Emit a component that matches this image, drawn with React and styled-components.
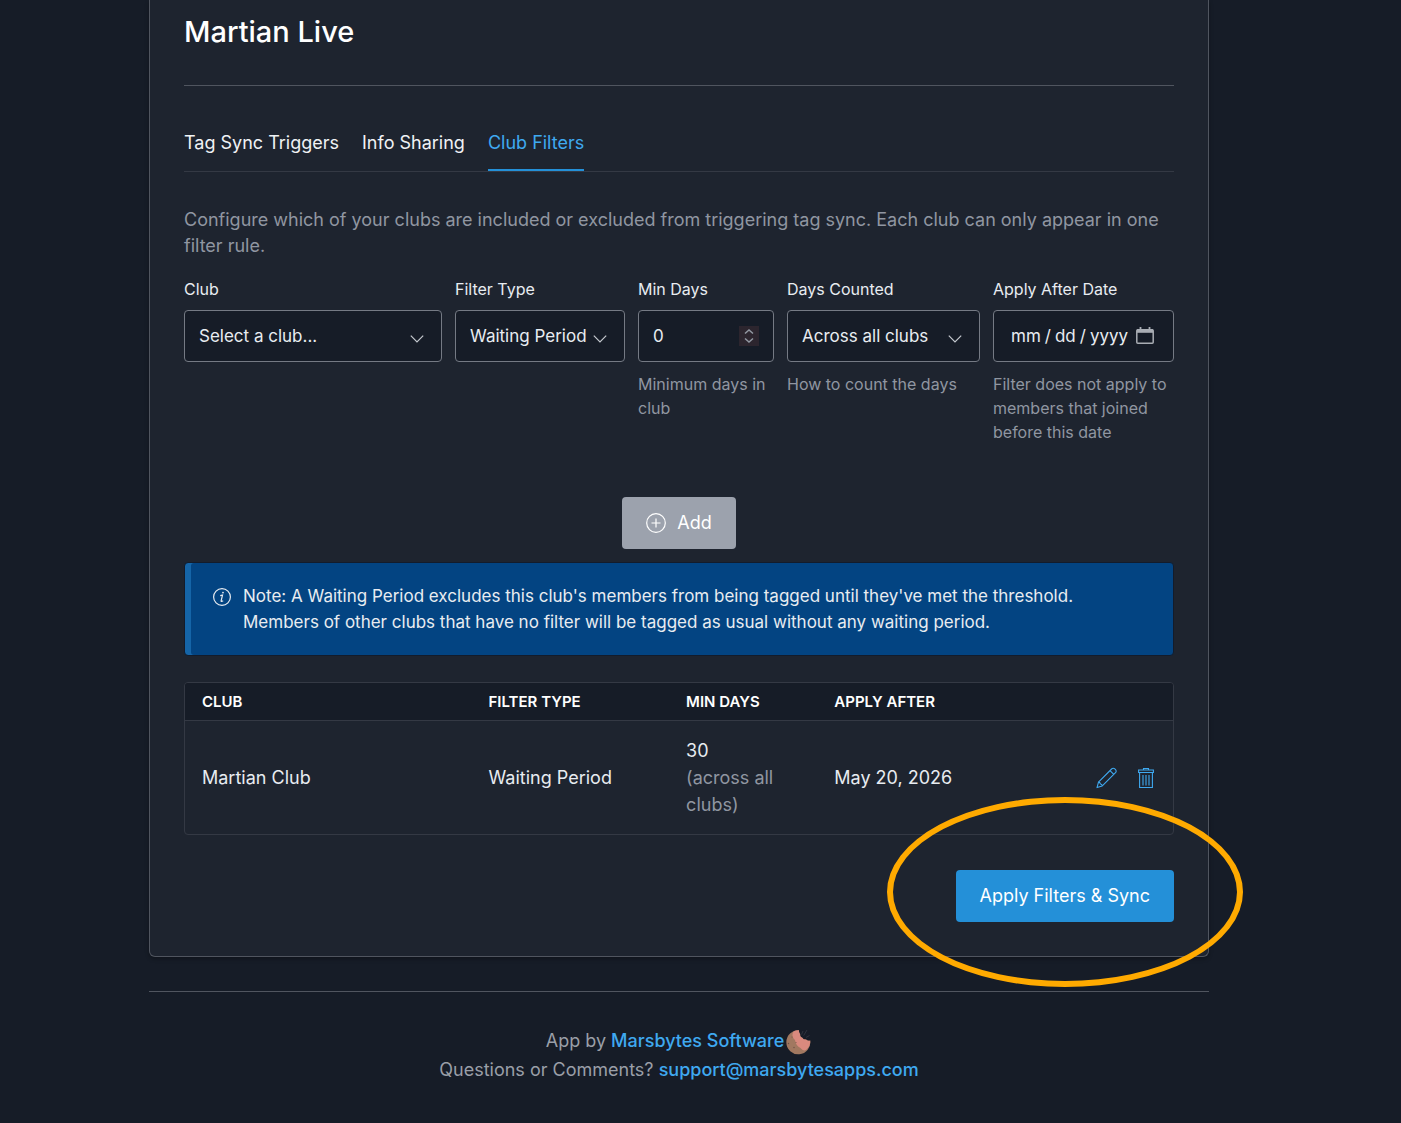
import React from 'react';
import styled, { createGlobalStyle, css } from 'styled-components';


const GlobalStyle = createGlobalStyle`
  *, *::before, *::after {
    box-sizing: border-box;
  }
  body {
    margin: 0;
    background: #161c27;
    color: #e8ecf1;
    font-family: 'Inter', 'Liberation Sans', sans-serif;
    font-size: 18px;
    line-height: 26px;
  }
`

const Page = styled.div`
  padding: 0 43px 40px 0;
  @media (max-width: 991.98px){
    padding: 0 16px 40px;
  }
`

const Container = styled.div`
  max-width: 1060px;
  margin: 0 auto;
`

const Card = styled.main`
  padding: 13px 34px 34px;
  background: #1e242f;
  border: 1px solid #50555f;
  border-top: 0;
  border-radius: 0 0 6px 6px;
  box-shadow: 0 2px 4px rgba(0, 0, 0, 0.3);
`

const Title = styled.h1`
  margin: 0;
  padding-bottom: 34px;
  border-bottom: 1px solid #50555f;
  color: #ffffff;
  font-size: 29px;
  font-weight: 500;
  line-height: 38px;
`

const Tabs = styled.nav`
  display: flex;
  gap: 23px;
  margin-top: 28px;
  border-bottom: 1px solid #343944;
`

const Tab = styled.a`
  padding: 16px 0 13px;
  border-bottom: 2px solid ${props => props.$active ? '#2490d8' : 'transparent'};
  color: ${props => props.$active ? '#3fa9f0' : '#f0f2f5'};
  text-decoration: none;
`

const Description = styled.p`
  margin: 35px 0 0;
  color: #9096a1;
`

const Fields = styled.form`
  display: grid;
  grid-template-columns: 258fr 170fr 136fr 193fr 181fr;
  gap: 13px;
  margin-top: 17px;
  @media (max-width: 991.98px){
    grid-template-columns: 1fr;
  }
`

const Field = styled.div`
  min-width: 0;
`

const Label = styled.label`
  display: block;
  margin-bottom: 8px;
  font-size: 16px;
`

const ControlBox = styled.div`
  display: grid;
  grid-template-columns: minmax(0, 1fr);
  align-items: center;
  height: 52px;
  background: #161c27;
  border: 1px solid #757a84;
  border-radius: 4px;
  font-size: 17px;
`

const controlStyle = css`
  grid-area: 1 / 1;
  width: 100%;
  height: 50px;
  margin: 0;
  padding: 0 14px;
  background: transparent;
  border: 0;
  color: inherit;
  font: inherit;
  appearance: none;
`

const Select = styled.select`
  ${controlStyle}
`

const NumberInput = styled.input`
  ${controlStyle}
  appearance: textfield;
  &::-webkit-inner-spin-button {
    display: none;
  }
`

const DateInput = styled.input`
  ${controlStyle}
  padding: 0 16px;
  &::-webkit-calendar-picker-indicator {
    opacity: 0;
  }
  &::-webkit-datetime-edit-text {
    padding: 0 3px;
  }
`

const ControlIcon = styled.svg`
  grid-area: 1 / 1;
  justify-self: end;
  margin-right: ${props => props.$inset};
  pointer-events: none;
`

const Help = styled.p`
  margin: 10px 0 0;
  color: #9096a1;
  font-size: 16px;
  line-height: 24px;
`

const ButtonRow = styled.div`
  display: flex;
  justify-content: ${props => props.$align};
  margin-top: ${props => props.$top};
`

const Button = styled.button`
  display: flex;
  align-items: center;
  gap: 11px;
  height: 52px;
  padding: 0 24px;
  background: ${props => props.disabled ? '#9ca2ad' : '#2490d8'};
  border: 0;
  border-radius: 4px;
  color: #ffffff;
  font: inherit;
`

const Note = styled.div`
  display: flex;
  gap: 12px;
  margin-top: 13px;
  padding: 20px 24px 20px 28px;
  background: #034482;
  border: 1px solid #131c2c;
  border-radius: 4px;
  box-shadow: inset 6px 0 #1565a8;
  font-size: 17px;
  svg {
    flex: none;
    margin-top: 5px;
  }
`

const TableFrame = styled.div`
  margin-top: 26px;
  overflow: hidden;
  border: 1px solid #343944;
  border-radius: 4px;
`

const Table = styled.table`
  width: 100%;
  border-collapse: collapse;
  table-layout: fixed;
`

const HeadCell = styled.th`
  width: ${props => props.$width};
  padding: 6px 17px 5px;
  background: #161c27;
  border-bottom: 1px solid #343944;
  color: #ffffff;
  font-size: 15px;
  font-weight: 600;
  text-align: left;
  text-transform: uppercase;
`

const Cell = styled.td`
  padding: 16px 17px;
  line-height: 27px;
`

const Muted = styled.span`
  display: block;
  color: #9096a1;
`

const RowActions = styled.div`
  display: flex;
  justify-content: flex-end;
  gap: 20px;
  padding-right: 2px;
`

const IconButton = styled.button`
  display: flex;
  padding: 0;
  background: none;
  border: 0;
  color: #3fa9f0;
`

const Highlighted = styled.div`
  position: relative;
`

const Ring = styled.div`
  position: absolute;
  top: -73px;
  right: -69px;
  width: 356px;
  height: 190px;
  border: 6px solid #ffaa00;
  border-radius: 50%;
  pointer-events: none;
`

const Footer = styled.footer`
  margin-top: 34px;
  padding-top: 34px;
  border-top: 1px solid #50555f;
  color: #9a9fa8;
  text-align: center;
`

const FooterLine = styled.div`
  display: flex;
  justify-content: center;
  align-items: center;
  line-height: 29px;
  white-space: pre-wrap;
`

const FooterLink = styled.a`
  color: #3fa9f0;
  font-weight: 500;
  text-decoration: none;
`


const Chevron = () => (
  <ControlIcon $inset="16px" width="16" height="16" viewBox="0 0 16 16" fill="none" stroke="#c5c9cf" strokeWidth="1.2">
    <path d="M1.8 7.6L8 14L14.2 7.6" />
  </ControlIcon>
)

const Spinner = () => (
  <ControlIcon $inset="14px" width="20" height="20" viewBox="0 0 20 20" fill="none" stroke="#9298a2" strokeWidth="1.5">
    <rect width="20" height="20" fill="#2c252e" stroke="none" />
    <path d="M6 7.5L10 4L14 7.5M6 12.5L10 16L14 12.5" />
  </ControlIcon>
)

const CalendarIcon = () => (
  <ControlIcon $inset="19px" width="18" height="18" viewBox="0 0 18 18" fill="none" stroke="#a9adb4">
    <rect x="0.8" y="2.8" width="16.4" height="13.4" rx="1" strokeWidth="1.5" />
    <path d="M1 4H17" strokeWidth="3.6" />
    <path d="M4.5 0V3M13.5 0V3" strokeWidth="1.8" />
  </ControlIcon>
)

const PlusIcon = () => (
  <svg width="20" height="20" viewBox="0 0 20 20" fill="none" stroke="#ffffff" strokeWidth="1.2">
    <circle cx="10" cy="10" r="9.3" />
    <path d="M10 5.5V14.5M5.5 10H14.5" />
  </svg>
)

const InfoIcon = () => (
  <svg width="18" height="18" viewBox="0 0 18 18" fill="none" stroke="#e8ecf1">
    <circle cx="9" cy="9" r="8.4" strokeWidth="1.2" />
    <path d="M7.2 7.6L9.5 7.1L8.1 13Q8 13.9 10.2 12.8" strokeWidth="1.2" />
    <circle cx="10" cy="4.6" r="0.9" fill="#e8ecf1" stroke="none" />
  </svg>
)

const PencilIcon = () => (
  <svg width="22" height="22" viewBox="0 0 22 22" fill="none" stroke="currentColor" strokeWidth="1.1" strokeLinejoin="round">
    <path d="M1 20.6L2.5 15.1L15.6 2Q17.2 0.5 19.1 2.2Q21 4.1 19.5 5.6L6.3 18.9Z" />
    <path d="M2.5 15.1Q4.2 15.2 4.5 17Q6.1 17.2 6.3 18.9M14 3.6L17.8 7.3" />
  </svg>
)

const TrashIcon = () => (
  <svg width="16" height="22" viewBox="0 0 16 22" fill="none" stroke="currentColor" strokeWidth="1.1">
    <path d="M5.5 3V1.5H10.5V3M0.6 3H15.4V5.5H0.6ZM1.6 5.5V20.5H14.4V5.5M5 8V18.5M8 8V18.5M11 8V18.5" />
  </svg>
)

const Planet = () => (
  <svg width="28" height="28" viewBox="0 0 28 28">
    <path d="M15 3.3A12 12 0 1 0 26.2 13.5Q24 14.4 22 12.5Q19.7 13 18.3 10.7Q15.8 10 16.2 7.5Q14.6 5.5 15 3.3Z" fill="#a17860" />
    <path d="M15 3.3Q10 2.8 8.8 6Q7.5 10 11 13Q12 19 16.5 21Q19 24.5 22 23Q26.7 19 26.2 13.5Q24 14.4 22 12.5Q19.7 13 18.3 10.7Q15.8 10 16.2 7.5Q14.6 5.5 15 3.3Z" fill="#d98a7e" />
    <path d="M19 4L17.5 7.5M23 3L19.7 8.5M25.5 8.5L22 10.5" stroke="#333943" strokeWidth="0.8" />
    <g fill="#6e5145">
      <circle cx="4.5" cy="16.5" r="0.7" />
      <circle cx="10" cy="20.5" r="0.7" />
      <circle cx="12" cy="15.5" r="0.5" />
      <circle cx="8" cy="10" r="0.5" />
    </g>
  </svg>
)


const SelectField = ({ id, label, options, help }) => (
  <Field>
    <Label htmlFor={id}>{label}</Label>
    <ControlBox>
      <Select id={id}>
        {options.map(option => <option key={option}>{option}</option>)}
      </Select>
      <Chevron />
    </ControlBox>
    {help && <Help>{help}</Help>}
  </Field>
)


const App = () => {
  return(
    <Page>
      <GlobalStyle />
      <Container>
        <Card>
          <Title>Martian Live</Title>
          <Tabs>
            <Tab href="#triggers">Tag Sync Triggers</Tab>
            <Tab href="#sharing">Info Sharing</Tab>
            <Tab href="#filters" $active>Club Filters</Tab>
          </Tabs>
          <Description>
            Configure which of your clubs are included or excluded from triggering tag sync. Each club can only appear in one filter rule.
          </Description>
          <Fields>
            <SelectField id="club" label="Club" options={['Select a club...', 'Martian Club']} />
            <SelectField id="type" label="Filter Type" options={['Waiting Period']} />
            <Field>
              <Label htmlFor="days">Min Days</Label>
              <ControlBox>
                <NumberInput id="days" type="number" min="0" defaultValue="0" />
                <Spinner />
              </ControlBox>
              <Help>Minimum days in club</Help>
            </Field>
            <SelectField id="counted" label="Days Counted" options={['Across all clubs']} help="How to count the days" />
            <Field>
              <Label htmlFor="after">Apply After Date</Label>
              <ControlBox>
                <DateInput id="after" type="date" />
                <CalendarIcon />
              </ControlBox>
              <Help>Filter does not apply to members that joined before this date</Help>
            </Field>
          </Fields>
          <ButtonRow $align="center" $top="53px">
            <Button type="button" disabled><PlusIcon />Add</Button>
          </ButtonRow>
          <Note>
            <InfoIcon />
            <div>
              Note: A Waiting Period excludes this club's members from being tagged until they've met the threshold.
              <br />
              Members of other clubs that have no filter will be tagged as usual without any waiting period.
            </div>
          </Note>
          <TableFrame>
            <Table>
              <thead>
                <tr>
                  <HeadCell $width="29%">Club</HeadCell>
                  <HeadCell $width="20%">Filter Type</HeadCell>
                  <HeadCell $width="15%">Min Days</HeadCell>
                  <HeadCell $width="18%">Apply After</HeadCell>
                  <HeadCell $width="18%" aria-label="Actions" />
                </tr>
              </thead>
              <tbody>
                <tr>
                  <Cell>Martian Club</Cell>
                  <Cell>Waiting Period</Cell>
                  <Cell>30 <Muted>(across all clubs)</Muted></Cell>
                  <Cell>May 20, 2026</Cell>
                  <Cell>
                    <RowActions>
                      <IconButton type="button" aria-label="Edit"><PencilIcon /></IconButton>
                      <IconButton type="button" aria-label="Delete"><TrashIcon /></IconButton>
                    </RowActions>
                  </Cell>
                </tr>
              </tbody>
            </Table>
          </TableFrame>
          <ButtonRow $align="flex-end" $top="35px">
            <Highlighted>
              <Button type="button">Apply Filters &amp; Sync</Button>
              <Ring />
            </Highlighted>
          </ButtonRow>
        </Card>
        <Footer>
          <FooterLine>
            <span>App by </span>
            <FooterLink href="#marsbytes">Marsbytes Software</FooterLink>
            <Planet />
          </FooterLine>
          <FooterLine>
            <span>Questions or Comments? </span>
            <FooterLink href="mailto:support@marsbytesapps.com">support@marsbytesapps.com</FooterLink>
          </FooterLine>
        </Footer>
      </Container>
    </Page>
  );
}

export default App;
